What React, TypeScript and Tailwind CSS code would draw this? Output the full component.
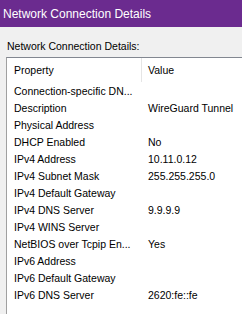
import React from 'react';

const rows: [string, string][] = [
  ['Connection-specific DN...', ''],
  ['Description', 'WireGuard Tunnel'],
  ['Physical Address', ''],
  ['DHCP Enabled', 'No'],
  ['IPv4 Address', '10.11.0.12'],
  ['IPv4 Subnet Mask', '255.255.255.0'],
  ['IPv4 Default Gateway', ''],
  ['IPv4 DNS Server', '9.9.9.9'],
  ['IPv4 WINS Server', ''],
  ['NetBIOS over Tcpip En...', 'Yes'],
  ['IPv6 Address', ''],
  ['IPv6 Default Gateway', ''],
  ['IPv6 DNS Server', '2620:fe::fe'],
];

export default function App() {
  return (
    <div
      className="w-[242px] h-[314px] overflow-hidden bg-[#f0f0f0] flex flex-col text-black"
      style={{ fontFamily: '"Liberation Sans", Arial, sans-serif' }}
    >
      {/* title bar */}
      <div className="h-[27px] shrink-0 bg-[#6b2b8f] flex items-center pl-[3px] text-white text-[12px] leading-none">
        Network Connection Details
      </div>

      <div className="h-[30px] shrink-0 flex items-center pl-[7px] pt-[8px] text-[10.5px] leading-none">
        Network Connection Details:
      </div>

      {/* list view */}
      <div className="ml-[6px] flex-1 bg-white border-t border-l border-t-[#828790] border-l-[#a0a0a0] text-[10.5px] leading-none">
        <div className="h-[25px] flex">
          <div className="w-[134px] flex items-center pl-[7px]">Property</div>
          <div className="w-px h-[24px] bg-[#e5e5e5]" />
          <div className="flex-1 flex items-center pl-[6px]">Value</div>
        </div>
        {rows.map(([k, v]) => (
          <div key={k} className="h-[17px] flex items-center">
            <div className="w-[135px] pl-[7px] whitespace-nowrap">{k}</div>
            <div className="flex-1 pl-[6px] whitespace-nowrap">{v}</div>
          </div>
        ))}
      </div>
    </div>
  );
}
